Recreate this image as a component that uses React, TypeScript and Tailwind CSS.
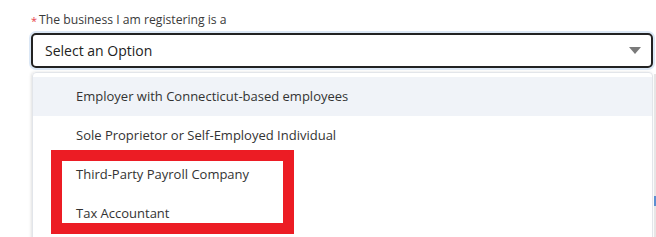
const options = [
  'Employer with Connecticut-based employees',
  'Sole Proprietor or Self-Employed Individual',
  'Third-Party Payroll Company',
  'Tax Accountant',
]

export default function App() {
  return (
    <div
      className="relative w-[656px] h-[237px] overflow-hidden bg-white text-[#333]"
      style={{ fontFamily: '"Open Sans", "Noto Sans", sans-serif' }}
    >
      <div className="pl-[31px] pr-[3px] pt-[11px]">
        {/* Label */}
        <label className="flex items-center gap-[2px] h-[18px] text-[12.2px] leading-none text-[#3a3a3a]">
          <span className="text-[#e8414b] text-[11px]">*</span>
          <span>The business I am registering is a</span>
        </label>

        {/* Select */}
        <div className="mt-[4px] h-[35px] rounded-[5px] border-2 border-[#222] ring-2 ring-[#dbe7f5] flex items-center justify-between pl-[12px] pr-[10px]">
          <span className="text-[14px] text-[#222]">Select an Option</span>
          <svg width="12" height="8" viewBox="0 0 12 8" className="text-[#7a7a7a]">
            <path d="M0 0h12L6 7z" fill="currentColor" />
          </svg>
        </div>

        {/* Menu */}
        <div className="mt-[4px] ml-[1px] rounded-t-[4px] border border-[#e2e5ea] shadow-[-1px_0_3px_rgba(0,0,0,0.12)] pt-[4px] h-[200px]">
          {options.map((o, i) => (
            <div
              key={o}
              className={`h-[39px] flex items-center pl-[43px] text-[13px] ${i === 0 ? 'bg-[#f0f3f8]' : ''}`}
            >
              {o}
            </div>
          ))}
        </div>
      </div>

      {/* scrollbar hint */}
      <div className="absolute right-0 top-[74px] w-[2px] h-[163px] bg-[#e6e6e6]" />
      <div className="absolute right-0 top-[196px] w-[2px] h-[10px] bg-[#5b8fd0]" />

      {/* annotation box */}
      <div className="absolute left-[51px] top-[150px] w-[243px] h-[84px] border-[11px] border-[#ec1c24]" />
    </div>
  )
}
